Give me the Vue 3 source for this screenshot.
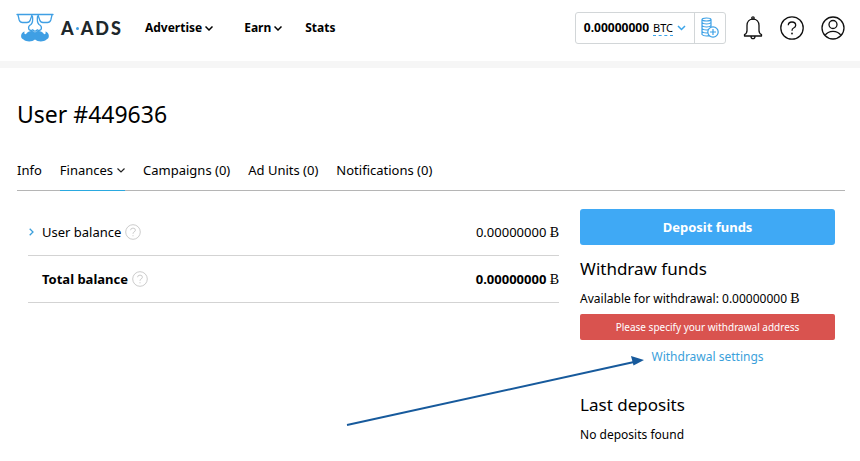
<script setup>
const menu = [
  { label: 'Advertise', drop: true },
  { label: 'Earn', drop: true },
  { label: 'Stats', drop: false }
]

const tabs = [
  { label: 'Info' },
  { label: 'Finances', drop: true, active: true },
  { label: 'Campaigns (0)' },
  { label: 'Ad Units (0)' },
  { label: 'Notifications (0)' }
]

const balances = [
  { label: 'User balance', amount: '0.00000000', expandable: true },
  { label: 'Total balance', amount: '0.00000000', total: true }
]
</script>

<template>
  <div class="page">
    <header class="header">
      <a class="logo" href="#" aria-label="A-ADS">
        <svg class="logo-mark" width="38" height="30" viewBox="0 0 38 30" fill="none" stroke="#3f9fe4" stroke-width="1.3" stroke-linejoin="round" stroke-linecap="round">
          <path d="M1 1.500H37M2 2L3.200 7Q4 9.500 6.500 9.500H11Q13.500 9.500 14.300 7L16 2M36 2L34.800 7Q34 9.500 31.500 9.500H27Q24.500 9.500 23.700 7L22 2" />
          <path d="M16.500 3.500Q17.300 9 15 11.500C11.500 13 12 17.500 15 17.500Q16 17.500 16.800 16.800Q19 19.500 21.200 16.800Q22 17.500 23 17.500C26 17.500 26.500 13 23 11.500Q20.700 9 21.500 3.500" />
          <path fill="#3f9fe4" stroke="none" d="M19 19.500C16.500 17 12 18 10.500 20.500C9.500 22 7.700 21.400 8.600 18.500C4.600 19.300 3.800 25.400 7.500 26.500C11 29.500 16.500 28.700 19 26.500C21.500 28.700 27 29.500 30.500 26.500C34.200 25.400 33.400 19.300 29.400 18.500C30.300 21.400 28.500 22 27.500 20.500C26 18 21.500 17 19 19.500Z" />
        </svg>
        <span class="wordmark"><span>A</span><i class="logo-dot"></i><span>A</span><span>D</span><span>S</span></span>
      </a>

      <nav class="menu" aria-label="Main">
        <a v-for="item in menu" :key="item.label" href="#">
          {{ item.label }}
          <svg v-if="item.drop" width="8" height="5" viewBox="0 0 8 5" fill="none" stroke="#000" stroke-width="1.5"><path d="M.5.5L4 4L7.500.5" /></svg>
        </a>
      </nav>

      <div class="tools">
        <div class="wallet">
          <button class="currency" type="button">
            <strong>0.00000000</strong>
            <span class="code">BTC</span>
            <svg width="9" height="6" viewBox="0 0 9 6" fill="none" stroke="#3ba5ea" stroke-width="1.5"><path d="M1 1L4.500 4.500L8 1" /></svg>
          </button>
          <button class="coins" type="button" aria-label="Add funds">
            <svg width="18" height="22" viewBox="0 0 18 22" fill="none" stroke="#3ba0e6" stroke-width="1.200">
              <path d="M1 2.500Q1 1 5.500 1T10 2.500V18Q9 19 5.500 19T1 17.500ZM1 2.500Q1.500 4 5.500 4T10 2.500M1 5.500Q2 7 5.500 7T10 5.500M1 8.500Q2 10 5.500 10T10 8.500M1 11.500Q2 13 5.500 13T10 11.500M1 14.500Q2 16 5.500 16T10 14.500" />
              <circle cx="12" cy="15" r="5.200" fill="#fff" />
              <path d="M12 12V18M9 15H15" />
            </svg>
          </button>
        </div>
        <button class="icon bell" type="button" aria-label="Alerts">
          <svg width="20" height="24" viewBox="0 0 20 24" fill="none" stroke="#111" stroke-width="1.300" stroke-linejoin="round">
            <circle cx="10" cy="2" r="1.200" />
            <path d="M10 3.200C6.200 3.200 4 6 4 9.500V14.500Q4 17.500 1.500 18.500V20H18.500V18.500Q16 17.500 16 14.500V9.500C16 6 13.800 3.200 10 3.200ZM8 20.200Q8 22.700 10 22.700T12 20.200" />
          </svg>
        </button>
        <button class="icon" type="button" aria-label="Help">
          <svg width="24" height="24" viewBox="0 0 24 24" fill="none" stroke="#111" stroke-width="1.300">
            <circle cx="12" cy="12" r="11.200" />
            <path d="M8.300 9.300Q8.300 6 12 6T15.700 9.200Q15.700 11 13.600 12Q12 12.700 12 14.800" />
            <circle cx="12" cy="17.500" r=".9" fill="#111" stroke="none" />
          </svg>
        </button>
        <button class="icon" type="button" aria-label="Account">
          <svg width="24" height="24" viewBox="0 0 24 24" fill="none" stroke="#111" stroke-width="1.300">
            <circle cx="12" cy="12" r="11" />
            <circle cx="12" cy="8.500" r="4" />
            <path d="M4 19.500Q6.500 15.300 12 15.300T20 19.500" />
          </svg>
        </button>
      </div>
    </header>

    <main class="main">
      <h1>User #449636</h1>

      <nav class="tabs" aria-label="Account sections">
        <a v-for="tab in tabs" :key="tab.label" href="#" :class="{ active: tab.active }">
          {{ tab.label }}
          <svg v-if="tab.drop" width="8" height="5" viewBox="0 0 8 5" fill="none" stroke="#222" stroke-width="1.200"><path d="M.5.5L4 4L7.500.5" /></svg>
        </a>
      </nav>

      <div class="content">
        <table class="balances">
          <tbody>
            <tr v-for="row in balances" :key="row.label" :class="{ total: row.total }">
              <th scope="row">
                <div class="name">
                  <span class="expander">
                    <svg v-if="row.expandable" width="5" height="8" viewBox="0 0 5 8" fill="none" stroke="#3b9fdb" stroke-width="1.300"><path d="M.7.7L4 4L.7 7.300" /></svg>
                  </span>
                  {{ row.label }}
                  <svg class="hint" width="16" height="16" viewBox="0 0 16 16" fill="none" stroke="#ccc" stroke-width="1">
                    <circle cx="8" cy="8" r="7.300" />
                    <path d="M5.600 6.200Q5.600 4.100 8 4.100T10.400 6.200Q10.400 7.300 9 8Q8 8.500 8 9.800M8 11.200V12.300" />
                  </svg>
                </div>
              </th>
              <td>{{ row.amount }} <span class="btc">Ƀ</span></td>
            </tr>
          </tbody>
        </table>

        <aside class="side">
          <button class="deposit" type="button">Deposit funds</button>
          <section class="withdraw">
            <h2>Withdraw funds</h2>
            <p>Available for withdrawal: 0.00000000 <span class="btc">Ƀ</span></p>
            <div class="alert" role="alert">Please specify your withdrawal address</div>
            <div class="settings">
              <a href="#">
                Withdrawal settings
                <svg class="pointer" width="298" height="72" viewBox="0 0 298 72" aria-hidden="true">
                  <path d="M1 70L288 7" fill="none" stroke="#175a9c" stroke-width="2" />
                  <path d="M298 5L285 1L287.500 10.500Z" fill="#175a9c" />
                </svg>
              </a>
            </div>
          </section>
          <section class="deposits">
            <h2>Last deposits</h2>
            <p>No deposits found</p>
          </section>
        </aside>
      </div>
    </main>
  </div>
</template>

<style>
body {
  margin: 0;
  background: #fff;
}
</style>

<style scoped>
.page {
  font-family: "Noto Sans", "Open Sans", sans-serif;
  font-size: 13px;
  line-height: 20px;
  color: #000;
}
a {
  color: inherit;
  text-decoration: none;
}
button {
  margin: 0;
  padding: 0;
  border: 0;
  background: none;
  font: inherit;
  color: inherit;
  cursor: pointer;
}
svg {
  display: block;
  flex: none;
}
h1,
h2,
p {
  margin: 0;
  font-weight: 400;
}

.header {
  display: flex;
  align-items: center;
  box-sizing: border-box;
  padding: 12px 15px 17px 16px;
  border-bottom: 7px solid #f6f6f6;
}
.logo {
  display: flex;
  align-items: center;
  gap: 7px;
}
.wordmark {
  display: flex;
  align-items: center;
  gap: 2px;
  font: 900 18px/20px Lato, sans-serif;
  color: #20282c;
}
.logo-dot {
  width: 3px;
  height: 3px;
  border-radius: 50%;
  background: #3f9fe4;
}
.menu {
  display: flex;
  margin-left: 24px;
  font-size: 12px;
  font-weight: 700;
}
.menu a {
  display: flex;
  align-items: center;
  gap: 3px;
}
.menu a + a {
  margin-left: 31px;
}
.menu a:last-child {
  margin-left: 23px;
}
.tools {
  display: flex;
  align-items: center;
  gap: 17px;
  margin-left: auto;
}
.wallet {
  display: flex;
  border: 1px solid #d2d6d8;
  border-radius: 3px;
}
.currency {
  display: flex;
  align-items: center;
  gap: 4px;
  padding: 0 8px;
  height: 30px;
  font-size: 12px;
}
.code {
  font-size: 11px;
  line-height: 15px;
  border-bottom: 1px dashed #3ba5ea;
}
.coins {
  display: flex;
  align-items: center;
  padding: 0 6px;
  border-left: 1px solid #d2d6d8;
}

.main {
  padding: 32px 15px 16px 17px;
}
h1 {
  font-size: 23px;
  line-height: 28px;
}
.tabs {
  display: flex;
  gap: 18px;
  margin-top: 32px;
  border-bottom: 1px solid #b5b5b5;
}
.tabs a {
  display: flex;
  align-items: center;
  gap: 4px;
  padding-bottom: 10px;
  margin-bottom: -1px;
  border-bottom: 1px solid transparent;
}
.tabs .active {
  border-color: #2aa9e0;
}

.content {
  display: grid;
  grid-template-columns: minmax(0, 25fr) minmax(0, 12fr);
  gap: 21px;
  align-items: start;
  padding: 18px 10px 0 11px;
}
.balances {
  width: 100%;
  border-collapse: collapse;
}
.balances th,
.balances td {
  height: 46px;
  padding: 0;
  border-bottom: 1px solid #d3d3d3;
  font-weight: 400;
  text-align: left;
}
.balances td {
  text-align: right;
}
.balances .total th,
.balances .total td {
  font-weight: 700;
}
.name {
  display: flex;
  align-items: center;
}
.expander {
  width: 13px;
  padding-left: 1px;
}
.hint {
  margin-left: 4px;
}
.btc,
.balances .btc {
  font-family: "Liberation Serif", serif;
  font-size: 14px;
  font-weight: 400;
  line-height: 16px;
}

.deposit {
  width: 100%;
  height: 36px;
  border-radius: 3px;
  background: #3fa9f5;
  color: #fff;
  font-weight: 700;
}
h2 {
  font-size: 18px;
  line-height: 24px;
}
.side h2 {
  font-size: 17px;
}
.side section {
  font-size: 12px;
}
.withdraw {
  margin-top: 12px;
}
.side p {
  margin-top: 8px;
}
.alert {
  margin-top: 5px;
  border-radius: 2px;
  background: #d9534f;
  color: #fff;
  font-size: 10px;
  line-height: 26px;
  text-align: center;
}
.settings {
  margin-top: 7px;
  text-align: center;
}
.settings a {
  position: relative;
  display: inline-block;
  color: #3b9fdb;
}
.pointer {
  position: absolute;
  top: 8px;
  right: 100%;
  margin-right: 8px;
  pointer-events: none;
}
.deposits {
  margin-top: 26px;
}
</style>
